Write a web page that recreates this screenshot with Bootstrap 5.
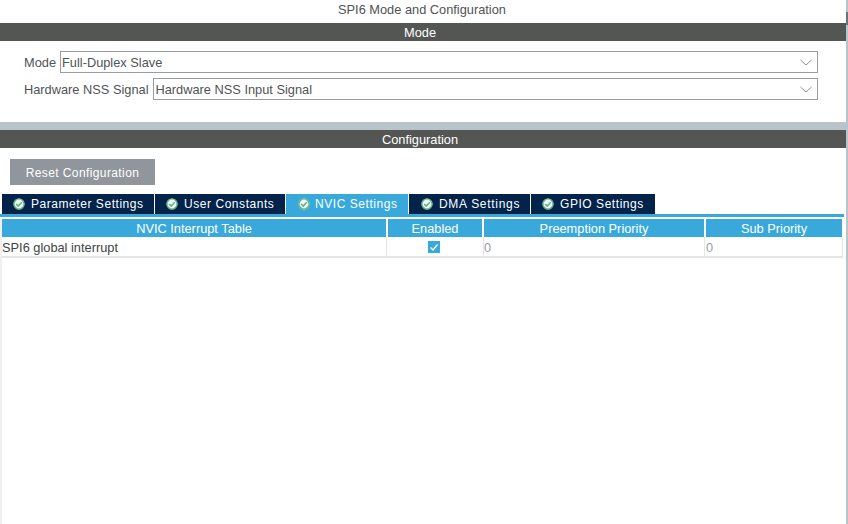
<!DOCTYPE html>
<html lang="en">
<head>
<meta charset="utf-8">
<link href="https://cdn.jsdelivr.net/npm/bootstrap@5.3.0/dist/css/bootstrap.min.css" rel="stylesheet">
<style>
html,body{height:524px;overflow:hidden;background:#fff}
body{font-family:"Liberation Sans",Arial,sans-serif;font-size:12.8px;color:#4f5356}
.shell{width:848px;height:524px}
.main-col{width:846px;height:524px}
.side-track{width:2px;height:524px;background:#b8c3ca}
.side-thumb{height:13px;margin-top:12px;background:#6d7378}
.page-title{height:23px;line-height:19px;text-align:center;padding-right:2px}
.band{height:18px;line-height:19px;background:#545654;color:#fff;text-align:center;padding-right:6px}
.mode-panel{height:81px;padding:10px 28px 0 24px}
.field-row{height:22px;margin-bottom:5px;gap:4px}
.field-text{padding-top:2px}
.field-label-wide{margin-right:1px}
.field-box{height:22px;border:1px solid #9a9d9f;padding:0 1px;line-height:20px;background:#fff}
.divider{height:8px;background:#b8c3ca}
.reset-btn{width:145px;height:26px;margin:11px 0 9px 10px;background:#90969c;color:#fff;border-radius:0;border:0;padding:1px 0 0;font-size:12px;letter-spacing:.4px}
.reset-btn:hover{background:#90969c;color:#fff}
.tabs-row{height:20px;margin-left:2px;gap:1px}
.tab-item{height:20px;background:#03234b;color:#fff;font-size:12px;letter-spacing:.55px;line-height:19px;padding-left:11px;gap:6px}
.tab-item.is-on{background:#39a9dc;padding-left:12px;gap:5px}
.tab-dma{padding-left:12px;letter-spacing:.7px}
.tab-item svg{flex:none}
.tab-w1{width:152px}.tab-w2{width:130px}.tab-w3{width:122px}.tab-w4{width:121px}.tab-w5{width:124px}
.tab-rule{height:3px;background:#39a9dc;margin-bottom:2px;width:844px}
.grid-wrap{height:305px;border-left:2px solid #f0f0f0}
.cells{height:18px}
.cell-h{background:#39a9dc;color:#fff;text-align:center;line-height:19px;margin-right:2px}
.row-b{height:21px;border-bottom:2px solid #e3e5e6;width:841px}
.cell-b{height:19px;border-right:1px solid #e3e5e6;line-height:21px;padding-left:0;color:#3f4346}
.w1{width:384px}.w2{width:94px}.w3{width:220px}.w4{width:136px}
.b1{width:385px}.b2{width:97px;padding-right:2px}.b3{width:221px}.b4{width:138px;padding-left:1px}
.muted{color:#9a9d9f}
.tick{width:12px;height:12px;background:#39a9dc;display:block}
</style>
</head>
<body>
<div class="shell d-flex">
 <div class="main-col">
  <div class="page-title">SPI6 Mode and Configuration</div>
  <div class="band">Mode</div>
  <div class="mode-panel">
    <div class="field-row d-flex align-items-center">
      <span class="field-text">Mode</span>
      <div class="field-box flex-grow-1 d-flex justify-content-between align-items-center"><span class="field-text">Full-Duplex Slave</span>
        <svg width="12" height="7" viewBox="0 0 12 7" class="me-1"><path d="M.5 1l5.500 5 5.500-5" fill="none" stroke="#8a8d90"/></svg></div>
    </div>
    <div class="field-row d-flex align-items-center">
      <span class="field-text field-label-wide">Hardware NSS Signal</span>
      <div class="field-box flex-grow-1 d-flex justify-content-between align-items-center"><span class="field-text">Hardware NSS Input Signal</span>
        <svg width="12" height="7" viewBox="0 0 12 7" class="me-1"><path d="M.5 1l5.500 5 5.500-5" fill="none" stroke="#8a8d90"/></svg></div>
    </div>
  </div>
  <div class="divider"></div>
  <div class="band">Configuration</div>
  <button type="button" class="btn reset-btn d-block">Reset Configuration</button>
  <div class="tabs-row d-flex align-items-start">
    <div class="tab-item tab-w1 d-flex align-items-center"><svg width="12" height="12" viewBox="0 0 12 12"><circle cx="6" cy="6" r="5.500" fill="#f4f8f5"/><circle cx="6" cy="6" r="5" fill="none" stroke="#5bb47f" stroke-width="1.200"/><path d="M3.200 6l2 2L8.800 4.300" fill="none" stroke="#5bb47f" stroke-width="1.600"/></svg><span>Parameter Settings</span></div>
    <div class="tab-item tab-w2 d-flex align-items-center"><svg width="12" height="12" viewBox="0 0 12 12"><circle cx="6" cy="6" r="5.500" fill="#f4f8f5"/><circle cx="6" cy="6" r="5" fill="none" stroke="#5bb47f" stroke-width="1.200"/><path d="M3.200 6l2 2L8.800 4.300" fill="none" stroke="#5bb47f" stroke-width="1.600"/></svg><span>User Constants</span></div>
    <div class="tab-item tab-w3 is-on d-flex align-items-center"><svg width="12" height="12" viewBox="0 0 12 12"><circle cx="6" cy="6" r="5.500" fill="#f4f8f5"/><circle cx="6" cy="6" r="5" fill="none" stroke="#5bb47f" stroke-width="1.200"/><path d="M3.200 6l2 2L8.800 4.300" fill="none" stroke="#5bb47f" stroke-width="1.600"/></svg><span>NVIC Settings</span></div>
    <div class="tab-item tab-w4 tab-dma d-flex align-items-center"><svg width="12" height="12" viewBox="0 0 12 12"><circle cx="6" cy="6" r="5.500" fill="#f4f8f5"/><circle cx="6" cy="6" r="5" fill="none" stroke="#5bb47f" stroke-width="1.200"/><path d="M3.200 6l2 2L8.800 4.300" fill="none" stroke="#5bb47f" stroke-width="1.600"/></svg><span>DMA Settings</span></div>
    <div class="tab-item tab-w5 d-flex align-items-center"><svg width="12" height="12" viewBox="0 0 12 12"><circle cx="6" cy="6" r="5.500" fill="#f4f8f5"/><circle cx="6" cy="6" r="5" fill="none" stroke="#5bb47f" stroke-width="1.200"/><path d="M3.200 6l2 2L8.800 4.300" fill="none" stroke="#5bb47f" stroke-width="1.600"/></svg><span>GPIO Settings</span></div>
  </div>
  <div class="tab-rule"></div>
  <div class="grid-wrap">
    <div class="cells d-flex">
      <div class="cell-h w1">NVIC Interrupt Table</div>
      <div class="cell-h w2">Enabled</div>
      <div class="cell-h w3">Preemption Priority</div>
      <div class="cell-h w4">Sub Priority</div>
    </div>
    <div class="row-b d-flex">
      <div class="cell-b b1">SPI6 global interrupt</div>
      <div class="cell-b b2 d-flex justify-content-center align-items-center"><svg class="tick" viewBox="0 0 12 12"><path d="M2.500 6.500l2.500 2.500 4.500-5.500" fill="none" stroke="#fff" stroke-width="1.300"/></svg></div>
      <div class="cell-b b3 muted">0</div>
      <div class="cell-b b4 muted">0</div>
    </div>
  </div>
 </div>
 <div class="side-track"><div class="side-thumb"></div></div>
</div>
</body>
</html>
